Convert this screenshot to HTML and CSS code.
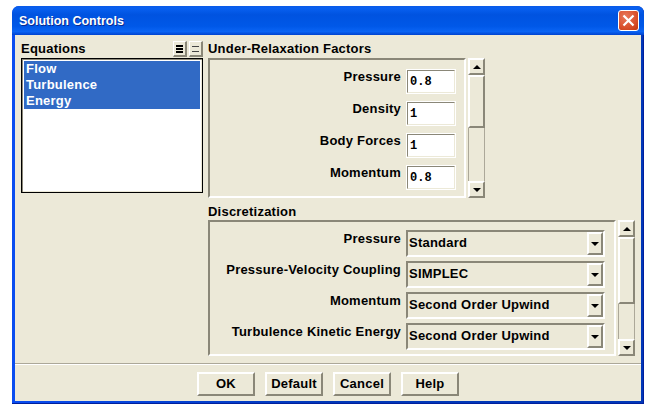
FILE: index.html
```html
<!DOCTYPE html>
<html lang="en">
<head>
    <meta charset="UTF-8">
    <title>Solution Controls</title>
    <link rel="stylesheet" href="styles.css">
</head>
<body>
    <div class="window">
        <div class="titlebar">
            <span class="title">Solution Controls</span>
            <div class="close">
                <svg width="13" height="13" viewBox="0 0 13 13"><path d="M1.5 1.5 L11.5 11.5 M11.5 1.5 L1.5 11.5" stroke="#fff" stroke-width="2.2"/></svg>
            </div>
        </div>
        <div class="client">
            <div class="main">
                <div class="left">
                    <div class="head">
                        <span class="heading">Equations</span>
                        <div class="select-btns">
                            <div class="small-btn"><span class="bars bars-all"></span></div>
                            <div class="small-btn"><span class="bars bars-none"></span></div>
                        </div>
                    </div>
                    <div class="listbox">
                        <div class="item">Flow</div>
                        <div class="item">Turbulence</div>
                        <div class="item">Energy</div>
                    </div>
                </div>
                <div class="right">
                    <div class="heading head">Under-Relaxation Factors</div>
                    <div class="section">
                        <div class="panel factors">
                            <label class="lbl">Pressure</label><input class="entry" value="0.8">
                            <label class="lbl">Density</label><input class="entry" value="1">
                            <label class="lbl">Body Forces</label><input class="entry" value="1">
                            <label class="lbl">Momentum</label><input class="entry" value="0.8">
                        </div>
                        <div class="scrollbar">
                            <div class="arrow-btn"><span class="up"></span></div>
                            <div class="thumb thumb-a"></div>
                            <div class="trough"></div>
                            <div class="arrow-btn"><span class="down"></span></div>
                        </div>
                    </div>
                    <div class="heading head disc-head">Discretization</div>
                    <div class="section">
                        <div class="panel schemes">
                            <label class="lbl">Pressure</label>
                            <div class="option"><span class="value">Standard</span><div class="arrow-btn"><span class="down"></span></div></div>
                            <label class="lbl">Pressure-Velocity Coupling</label>
                            <div class="option"><span class="value">SIMPLEC</span><div class="arrow-btn"><span class="down"></span></div></div>
                            <label class="lbl">Momentum</label>
                            <div class="option"><span class="value">Second Order Upwind</span><div class="arrow-btn"><span class="down"></span></div></div>
                            <label class="lbl">Turbulence Kinetic Energy</label>
                            <div class="option"><span class="value">Second Order Upwind</span><div class="arrow-btn"><span class="down"></span></div></div>
                        </div>
                        <div class="scrollbar scrollbar-b">
                            <div class="arrow-btn"><span class="up"></span></div>
                            <div class="thumb thumb-b"></div>
                            <div class="trough"></div>
                            <div class="arrow-btn"><span class="down"></span></div>
                        </div>
                    </div>
                </div>
            </div>
            <div class="footer">
                <button class="btn">OK</button>
                <button class="btn">Default</button>
                <button class="btn">Cancel</button>
                <button class="btn">Help</button>
            </div>
        </div>
    </div>
</body>
</html>
```

FILE: styles.css
```css
body {
    margin: 0;
    background: #fff;
    font-family: "Liberation Sans", Arial, sans-serif;
    font-size: 13px;
    font-weight: bold;
    letter-spacing: 0.22px;
    color: #000;
}
.window {
    box-sizing: border-box;
    width: 632px;
    height: 398px;
    margin: 6px 0 0 12px;
    padding: 0 3px 3px;
    background: linear-gradient(90deg, #0a4df0 0, #0a4df0 3px, #0037b8 50%, #0037b8 100%);
    border-radius: 7px 7px 0 0;
    box-shadow: inset -1px -1px 0 #001f9c;
    display: flex;
    flex-direction: column;
}
.titlebar {
    height: 29px;
    margin: 0 -3px;
    padding: 0 5px 0 7px;
    border-radius: 7px 7px 0 0;
    background: linear-gradient(180deg, #0a5ae8 0, #0860f0 8%, #0053e0 30%, #0058e8 70%, #0a64f4 88%, #0043cf 100%);
    display: flex;
    align-items: center;
    justify-content: space-between;
}
.title {
    padding-top: 1px;
    color: #fff;
    font-size: 12.5px;
    letter-spacing: 0;
    text-shadow: 1px 1px 0 #0a2a90;
}
.close {
    box-sizing: border-box;
    width: 21px;
    height: 21px;
    border: 1px solid #fff;
    border-radius: 3px;
    background: radial-gradient(circle at 35% 30%, #e8795c, #d9502c 60%, #c0360f);
    display: flex;
    align-items: center;
    justify-content: center;
}
.client {
    flex: 1;
    background: #ece9d8;
    display: flex;
    flex-direction: column;
}
.main {
    display: flex;
    gap: 5px;
    padding: 6px 0 0 6px;
}
.head {
    height: 17px;
    line-height: 16px;
}
.left {
    width: 182px;
}
.left .head {
    display: flex;
    justify-content: space-between;
}
.select-btns {
    display: flex;
    gap: 2px;
}
.small-btn {
    box-sizing: border-box;
    width: 14px;
    height: 16px;
    border: solid;
    border-width: 1px 2px 2px 1px;
    border-color: #fff #8a8778 #8a8778 #fff;
    display: flex;
    align-items: center;
    justify-content: center;
}
.bars {
    width: 7px;
}
.bars-all {
    height: 8px;
    background: repeating-linear-gradient(180deg, #000 0, #000 2px, transparent 2px, transparent 3px);
}
.bars-none {
    height: 6px;
    background: repeating-linear-gradient(180deg, #444 0, #444 1px, transparent 1px, transparent 5px);
}
.listbox {
    box-sizing: border-box;
    height: 135px;
    padding: 2px;
    background: #fff;
    border: 1px solid #000;
    box-shadow: inset 1px 1px 0 #8a8778, inset -1px -1px 0 #ece9d8;
}
.item {
    height: 16px;
    line-height: 16px;
    padding-left: 2px;
    background: #316ac5;
    color: #fff;
}
.right {
    width: 427px;
}
.section {
    display: flex;
    gap: 2px;
}
.disc-head {
    margin-top: 5px;
    line-height: 18px;
}
.panel {
    box-sizing: border-box;
    border: 2px solid;
    border-color: #8a8778 #fff #fff #8a8778;
    display: grid;
    column-gap: 5px;
    align-items: start;
}
.factors {
    width: 258px;
    height: 140px;
    padding-top: 9px;
    grid-template-columns: 191px 50px;
    grid-auto-rows: 25px;
    row-gap: 7px;
}
.schemes {
    width: 408px;
    height: 136px;
    padding-top: 8px;
    grid-template-columns: 191px 199px;
    grid-auto-rows: 27px;
    row-gap: 4px;
}
.lbl {
    text-align: right;
    line-height: 16px;
    white-space: nowrap;
}
.schemes .lbl {
    padding-top: 1px;
}
.entry {
    box-sizing: border-box;
    width: 50px;
    height: 25px;
    padding: 0 0 0 2px;
    border: 2px solid;
    border-color: #8a8778 #ece9d8 #ece9d8 #8a8778;
    outline: 1px solid #fff;
    outline-offset: -1px;
    background: #fff;
    font-family: "Liberation Mono", monospace;
    font-size: 12px;
    font-weight: bold;
    letter-spacing: 0;
}
.option {
    box-sizing: border-box;
    height: 27px;
    border: 2px solid;
    border-color: #8a8778 #fff #fff #8a8778;
    display: flex;
    align-items: center;
    justify-content: space-between;
}
.value {
    padding: 0 0 2px 1px;
}
.option .arrow-btn {
    width: 16px;
    height: 23px;
}
.scrollbar {
    width: 17px;
    height: 140px;
    display: flex;
    flex-direction: column;
}
.scrollbar-b {
    height: 136px;
}
.arrow-btn {
    box-sizing: border-box;
    flex: none;
    width: 17px;
    height: 17px;
    border: 2px solid;
    border-color: #fff #8a8778 #8a8778 #fff;
    display: flex;
    align-items: center;
    justify-content: center;
}
.up {
    border: 4px solid transparent;
    border-top: 0;
    border-bottom-color: #000;
}
.down {
    border: 4px solid transparent;
    border-bottom: 0;
    border-top-color: #000;
}
.thumb {
    box-sizing: border-box;
    flex: none;
    border: 2px solid;
    border-color: #fff #8a8778 #8a8778 #fff;
}
.thumb-a {
    height: 53px;
}
.thumb-b {
    height: 67px;
}
.trough {
    flex: 1;
    border-left: 1px solid #aca899;
    border-right: 1px solid #aca899;
}
.footer {
    margin-top: 7px;
    border-top: 1px solid #aca899;
    box-shadow: inset 0 1px 0 #fff;
    padding: 8px 0 0 182px;
    display: flex;
    gap: 10px;
}
.btn {
    box-sizing: border-box;
    width: 58px;
    height: 24px;
    padding: 0 0 2px;
    border: 2px solid;
    border-color: #fff #8a8778 #8a8778 #fff;
    background: #ece9d8;
    font: inherit;
    letter-spacing: 0.22px;
}
```
